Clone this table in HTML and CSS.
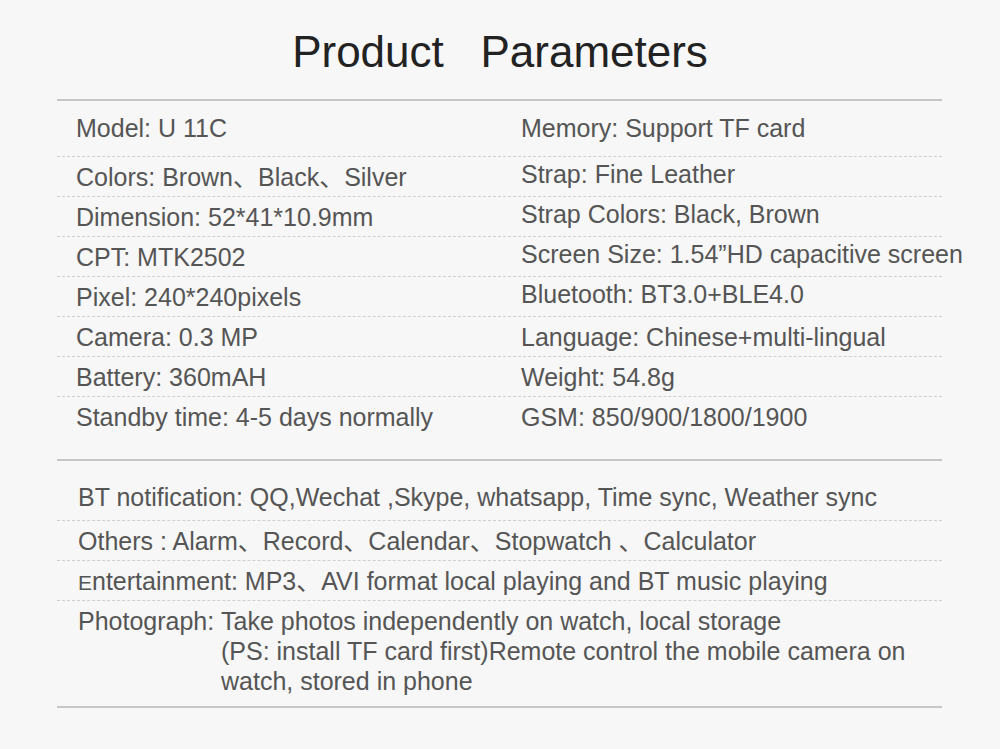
FILE: index.html
```html
<!DOCTYPE html>
<html lang="en">
<head>
<meta charset="utf-8">
<title>Product Parameters</title>
<link rel="stylesheet" href="styles.css">
</head>
<body>
<main class="sheet">
  <h1 class="title">Product&nbsp;&nbsp;&nbsp;Parameters</h1>

  <section class="specs specs--grid">
    <div class="row row--first">
      <div class="cell">Model: U 11C</div>
      <div class="cell">Memory: Support TF card</div>
    </div>
    <div class="row">
      <div class="cell">Colors: Brown、Black、Silver</div>
      <div class="cell cell--up">Strap: Fine Leather</div>
    </div>
    <div class="row">
      <div class="cell">Dimension: 52*41*10.9mm</div>
      <div class="cell cell--up">Strap Colors: Black, Brown</div>
    </div>
    <div class="row">
      <div class="cell">CPT: MTK2502</div>
      <div class="cell cell--up">Screen Size: 1.54”HD capacitive screen</div>
    </div>
    <div class="row">
      <div class="cell">Pixel: 240*240pixels</div>
      <div class="cell cell--up">Bluetooth: BT3.0+BLE4.0</div>
    </div>
    <div class="row">
      <div class="cell">Camera: 0.3 MP</div>
      <div class="cell">Language: Chinese+multi-lingual</div>
    </div>
    <div class="row">
      <div class="cell">Battery: 360mAH</div>
      <div class="cell">Weight: 54.8g</div>
    </div>
    <div class="row row--last">
      <div class="cell">Standby time: 4-5 days normally</div>
      <div class="cell">GSM: 850/900/1800/1900</div>
    </div>
  </section>

  <section class="specs specs--list">
    <div class="item item--first">BT notification: QQ,Wechat ,Skype, whatsapp, Time sync, Weather sync</div>
    <div class="item">Others : Alarm、Record、Calendar、Stopwatch 、Calculator</div>
    <div class="item"><span class="small-cap">E</span>ntertainment: MP3、AVI format local playing and BT music playing</div>
    <div class="item item--last">
      <span class="item-label">Photograph:</span>
      <span class="item-body">Take photos independently on watch, local storage<br>(PS: install TF card first)Remote control the mobile camera on<br>watch, stored in phone</span>
    </div>
  </section>
</main>
</body>
</html>
```

FILE: styles.css
```css
html, body {
  margin: 0;
  padding: 0;
}

body {
  background: #f7f7f7;
  font-family: "Liberation Sans", Arial, "Noto Sans CJK SC", sans-serif;
  color: #555555;
}

.sheet {
  width: 885px;
  margin-left: 57px;
  padding-top: 30px;
}

.title {
  margin: 0 0 25px -57px;
  width: 1000px;
  text-align: center;
  font-size: 44px;
  line-height: 44px;
  font-weight: normal;
  color: #222222;
}

.specs {
  border-top: 2px solid #c6c6c6;
}

.specs--list {
  border-bottom: 2px solid #c6c6c6;
}

.row {
  display: grid;
  grid-template-columns: 445px 1fr;
  padding-left: 19px;
  border-bottom: 1px dashed #cfcfcf;
  font-size: 25px;
  line-height: 30px;
  white-space: nowrap;
}

.cell {
  padding: 5px 0 4px;
}

.cell--up {
  padding: 2px 0 7px;
}

.row--first .cell {
  padding: 12px 0 13px;
}

.row--last {
  border-bottom: none;
}

.row--last .cell {
  padding: 5px 0 27px;
}

.item {
  padding: 5px 0 4px 21px;
  border-bottom: 1px dashed #cfcfcf;
  font-size: 25px;
  line-height: 30px;
  white-space: nowrap;
}

.item--first {
  padding-top: 21px;
  padding-bottom: 8px;
}

.item--last {
  display: flex;
  border-bottom: none;
  padding-bottom: 10px;
}

.item-label {
  width: 143px;
  flex: none;
}

.item-body {
  display: block;
}

.small-cap {
  font-size: 21px;
  line-height: 10px;
}
```
